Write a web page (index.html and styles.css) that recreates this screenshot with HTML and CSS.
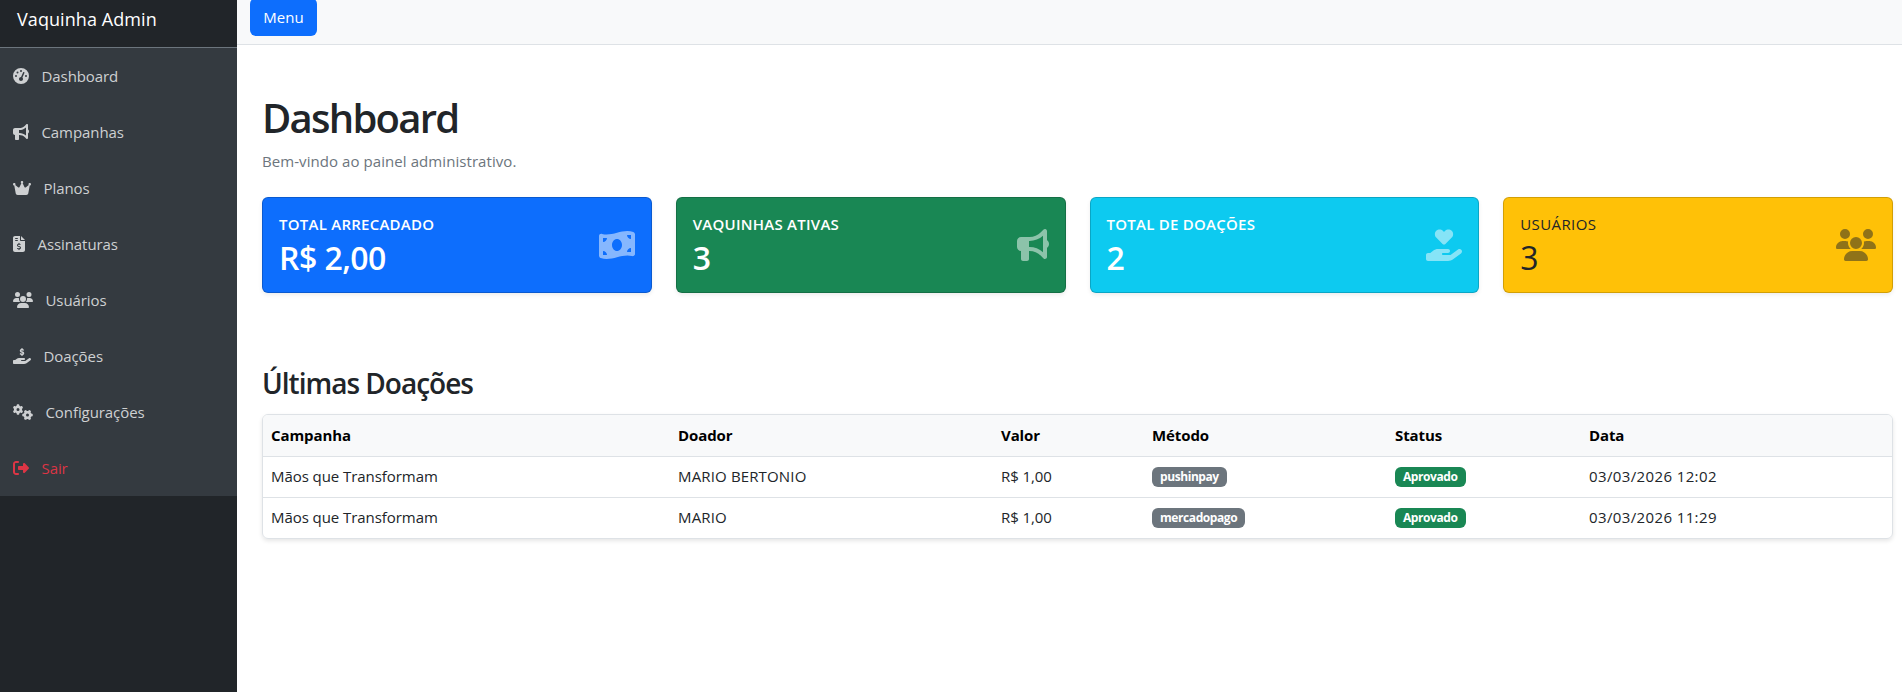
FILE: index.html
```html
<!DOCTYPE html>
<html lang="pt-BR">
<head>
<meta charset="utf-8">
<title>Vaquinha Admin</title>
<link rel="stylesheet" href="styles.css">
</head>
<body>
<div class="shell">
  <aside class="sidebar">
    <div class="brand">Vaquinha Admin</div>
    <nav class="nav">
      <a class="nav-link"><svg class="ico w16" viewBox="0 0 512 512"><path d="M0 256a256 256 0 1 1 512 0A256 256 0 1 1 0 256zM288 96a32 32 0 1 0 -64 0 32 32 0 1 0 64 0zM256 416c35.3 0 64-28.7 64-64c0-17.4-6.9-33.1-18.1-44.6L366 161.7c5.3-12.1-.2-26.3-12.3-31.6s-26.3 .2-31.6 12.3L257.9 288c-.6 0-1.3 0-1.9 0c-35.3 0-64 28.7-64 64s28.7 64 64 64zM176 144a32 32 0 1 0 -64 0 32 32 0 1 0 64 0zM96 288a32 32 0 1 0 0-64 32 32 0 1 0 0 64zm352-32a32 32 0 1 0 -64 0 32 32 0 1 0 64 0z"/></svg>Dashboard</a>
      <a class="nav-link"><svg class="ico w16" viewBox="0 0 512 512"><path d="M480 32c0-12.9-7.8-24.6-19.8-29.6s-25.7-2.2-34.9 6.9L381.7 53c-48 48-113.1 75-181 75H192 160 64c-35.3 0-64 28.7-64 64v96c0 35.3 28.7 64 64 64l0 128c0 17.7 14.3 32 32 32h64c17.7 0 32-14.3 32-32V352l8.7 0c67.9 0 133 27 181 75l43.6 43.6c9.2 9.2 22.9 11.9 34.9 6.9s19.8-16.6 19.8-29.6V300.4c18.6-8.8 32-32.5 32-60.4s-13.4-51.6-32-60.4V32zm-64 76.7V240 371.3C357.2 317.8 280.5 288 200.7 288H192V192h8.7c79.8 0 156.5-29.8 215.3-83.3z"/></svg>Campanhas</a>
      <a class="nav-link"><svg class="ico w18" viewBox="0 0 576 512"><path d="M309 106c11.4-7 19-19.7 19-34c0-22.1-17.9-40-40-40s-40 17.9-40 40c0 14.4 7.6 27 19 34L209.7 220.6c-9.1 18.2-32.7 23.4-48.6 10.7L72 160c5-6.7 8-15 8-24c0-22.1-17.9-40-40-40S0 113.9 0 136s17.9 40 40 40c.2 0 .5 0 .7 0L86.4 427.4c5.5 30.4 32 52.6 63 52.6H426.6c30.9 0 57.4-22.1 63-52.6L535.3 176c.2 0 .5 0 .7 0c22.1 0 40-17.9 40-40s-17.9-40-40-40s-40 17.9-40 40c0 9 3 17.3 8 24l-89.1 71.3c-15.9 12.7-39.5 7.5-48.6-10.7L309 106z"/></svg>Planos</a>
      <a class="nav-link"><svg class="ico w12" viewBox="0 0 384 512"><path d="M64 0C28.7 0 0 28.7 0 64V448c0 35.3 28.7 64 64 64H320c35.3 0 64-28.7 64-64V160H256c-17.7 0-32-14.3-32-32V0H64zM256 0V128H384L256 0zM64 80c0-8.8 7.2-16 16-16h64c8.8 0 16 7.2 16 16s-7.2 16-16 16H80c-8.8 0-16-7.2-16-16zm0 64c0-8.8 7.2-16 16-16h64c8.8 0 16 7.2 16 16s-7.2 16-16 16H80c-8.8 0-16-7.2-16-16zm128 72c8.8 0 16 7.2 16 16v17.3c8.5 1.2 16.7 3.1 24.1 5.1c8.5 2.3 13.6 11 11.3 19.6s-11 13.6-19.6 11.3c-11.1-3-22-5.2-32.1-5.3c-8.4-.1-17.4 1.8-23.6 5.5c-5.7 3.4-8.1 7.3-8.1 12.8c0 3.7 1.3 6.5 7.3 10.1c6.9 4.1 16.6 7.1 29.2 10.9l.5 .1 0 0 0 0c11.3 3.4 25.3 7.6 36.3 14.6c12.1 7.6 22.4 19.7 22.7 38.2c.3 19.3-9.6 33.3-22.9 41.6c-7.7 4.8-16.4 7.6-25.1 9.1V440c0 8.8-7.2 16-16 16s-16-7.2-16-16V422.2c-11.2-2.1-21.7-5.7-30.9-8.9l0 0 0 0c-2.1-.7-4.2-1.4-6.2-2.1c-8.4-2.8-12.9-11.9-10.1-20.2s11.9-12.9 20.2-10.1c2.5 .8 4.8 1.6 7.1 2.4l0 0 0 0 0 0c13.6 4.6 24.6 8.4 36.3 8.7c9.1 .3 17.9-1.7 23.7-5.3c5.1-3.2 7.9-7.3 7.8-14c-.1-4.6-1.8-7.8-7.7-11.6c-6.8-4.3-16.5-7.4-29-11.2l-1.6-.5 0 0c-11-3.3-24.7-7.4-35.6-14c-12-7.2-22.6-18.9-22.7-37.3c-.1-19.4 10.8-32.8 23.8-40.5c7.5-4.4 15.8-7.2 24.1-8.7V232c0-8.8 7.2-16 16-16z"/></svg>Assinaturas</a>
      <a class="nav-link"><svg class="ico w20" viewBox="0 0 640 512"><path d="M144 0a80 80 0 1 1 0 160A80 80 0 1 1 144 0zM512 0a80 80 0 1 1 0 160A80 80 0 1 1 512 0zM0 298.7C0 239.8 47.8 192 106.7 192h42.7c15.9 0 31 3.5 44.6 9.7c-1.3 7.2-1.9 14.7-1.9 22.3c0 38.2 16.8 72.5 43.3 96c-.2 0-.4 0-.7 0H21.3C9.6 320 0 310.4 0 298.7zM405.3 320c-.2 0-.4 0-.7 0c26.6-23.5 43.3-57.8 43.3-96c0-7.6-.7-15-1.9-22.3c13.6-6.3 28.7-9.7 44.6-9.7h42.7C592.2 192 640 239.8 640 298.7c0 11.8-9.6 21.3-21.3 21.3H405.3zM224 224a96 96 0 1 1 192 0 96 96 0 1 1 -192 0zM128 485.3C128 411.7 187.7 352 261.3 352H378.7C452.3 352 512 411.7 512 485.3c0 14.7-11.9 26.7-26.7 26.7H154.7c-14.7 0-26.7-11.9-26.7-26.7z"/></svg>Usuários</a>
      <a class="nav-link"><svg class="ico w18" viewBox="0 0 576 512"><path d="M312 24V34.5c6.4 1.2 12.6 2.7 18.2 4.2c12.8 3.4 20.4 16.6 17 29.4s-16.6 20.4-29.4 17c-10.9-2.9-21.1-4.9-30.2-5c-7.3-.1-14.7 1.7-19.4 4.4c-2.1 1.3-3.1 2.4-3.5 3c-.3 .5-.7 1.2-.7 2.8c0 .3 0 .5 0 .6c.2 .2 .9 1.2 3.3 2.6c5.8 3.5 14.4 6.2 27.4 10.1l.9 .3c11.1 3.3 25.9 7.8 37.9 15.3c13.7 8.6 26.1 22.9 26.4 44.9c.3 22.5-11.4 38.9-26.7 48.5c-6.7 4.1-13.9 7-21.1 8.8V232c0 13.3-10.7 24-24 24s-24-10.7-24-24V220.6c-9.5-2.3-18.2-5.3-25.6-7.8c-2.1-.7-4.1-1.4-6-2c-12.6-4.2-19.4-17.8-15.2-30.4s17.8-19.4 30.4-15.2c2.6 .9 5 1.7 7.3 2.5c13.6 4.6 23.4 7.9 33.9 8.3c8 .3 15.1-1.6 19.2-4.1c1.9-1.2 2.8-2.2 3.2-2.9c.4-.6 .9-1.8 .8-4.1l0-.2c0-1 0-2.1-4-4.6c-5.7-3.6-14.3-6.4-27.1-10.3l-1.9-.6c-10.8-3.2-25-7.5-36.4-14.4c-13.5-8.1-26.5-22-26.6-44.1c-.1-22.9 12.9-38.6 27.7-47.4c6.4-3.8 13.3-6.4 20.2-8.2V24c0-13.3 10.7-24 24-24s24 10.7 24 24zM568.2 336.3c13.1 17.8 9.3 42.8-8.5 55.9L433.1 485.5c-23.4 17.2-51.6 26.5-80.7 26.5H192 32c-17.7 0-32-14.3-32-32V416c0-17.7 14.3-32 32-32H68.8l44.9-36c22.7-18.2 50.9-28 80-28H272h16 64c17.7 0 32 14.3 32 32s-14.3 32-32 32H288 272c-8.8 0-16 7.2-16 16s7.2 16 16 16H392.6l119.7-88.2c17.8-13.1 42.8-9.3 55.9 8.5z"/></svg>Doações</a>
      <a class="nav-link"><svg class="ico w20" viewBox="0 0 640 512"><path d="M308.5 135.3c7.1-6.3 9.9-16.2 6.2-25c-2.3-5.3-4.8-10.5-7.6-15.5L304 89.4c-3-5-6.3-9.9-9.8-14.6c-5.7-7.6-15.7-10.1-24.7-7.1l-28.2 9.3c-10.7-8.8-23-16-36.2-20.9L199 27.1c-1.9-9.3-9.1-16.7-18.5-17.8C173.9 8.4 167.2 8 160.4 8h-.7c-6.8 0-13.5 .4-20.1 1.2c-9.4 1.1-16.6 8.6-18.5 17.8L115 56.1c-13.3 5-25.5 12.1-36.2 20.9L50.5 67.8c-9-3-19-.5-24.7 7.1c-3.5 4.7-6.8 9.6-9.9 14.6l-3 5.3c-2.8 5-5.3 10.2-7.6 15.6c-3.7 8.7-.9 18.6 6.2 25l22.2 19.8C32.6 161.9 32 168.9 32 176s.6 14.1 1.7 20.9L11.5 216.7c-7.1 6.3-9.9 16.2-6.2 25c2.3 5.3 4.8 10.5 7.6 15.6l3 5.2c3 5.1 6.3 9.9 9.9 14.6c5.7 7.6 15.7 10.1 24.7 7.1l28.2-9.3c10.7 8.8 23 16 36.2 20.9l6.1 29.1c1.9 9.3 9.1 16.7 18.5 17.8c6.7 .8 13.5 1.2 20.4 1.2s13.7-.4 20.4-1.2c9.4-1.1 16.6-8.6 18.5-17.8l6.1-29.1c13.3-5 25.5-12.1 36.2-20.9l28.2 9.3c9 3 19 .5 24.7-7.1c3.5-4.7 6.8-9.5 9.8-14.6l3.1-5.4c2.8-5 5.3-10.2 7.6-15.5c3.7-8.7 .9-18.6-6.2-25l-22.2-19.8c1.1-6.8 1.7-13.8 1.7-20.9s-.6-14.1-1.7-20.9l22.2-19.8zM112 176a48 48 0 1 1 96 0 48 48 0 1 1 -96 0zM504.7 500.5c6.3 7.1 16.2 9.9 25 6.2c5.3-2.3 10.5-4.8 15.5-7.6l5.4-3.1c5-3 9.9-6.3 14.6-9.8c7.6-5.7 10.1-15.7 7.1-24.7l-9.3-28.2c8.8-10.7 16-23 20.9-36.2l29.1-6.1c9.3-1.9 16.7-9.1 17.8-18.5c.8-6.7 1.2-13.5 1.2-20.4s-.4-13.7-1.2-20.4c-1.1-9.4-8.6-16.6-17.8-18.5L583.9 307c-5-13.3-12.1-25.5-20.9-36.2l9.3-28.2c3-9 .5-19-7.1-24.7c-4.7-3.5-9.6-6.8-14.6-9.9l-5.3-3c-5-2.8-10.2-5.3-15.6-7.6c-8.7-3.7-18.6-.9-25 6.2l-19.8 22.2c-6.8-1.1-13.8-1.7-20.9-1.7s-14.1 .6-20.9 1.7l-19.8-22.2c-6.3-7.1-16.2-9.9-25-6.2c-5.3 2.3-10.5 4.8-15.6 7.6l-5.2 3c-5.1 3-9.9 6.3-14.6 9.9c-7.6 5.7-10.1 15.7-7.1 24.7l9.3 28.2c-8.8 10.7-16 23-20.9 36.2L315.1 313c-9.3 1.9-16.7 9.1-17.8 18.5c-.8 6.7-1.2 13.5-1.2 20.4s.4 13.7 1.2 20.4c1.1 9.4 8.6 16.6 17.8 18.5l29.1 6.1c5 13.3 12.1 25.5 20.9 36.2l-9.3 28.2c-3 9-.5 19 7.1 24.7c4.7 3.5 9.5 6.8 14.6 9.8l5.4 3.1c5 2.8 10.2 5.3 15.5 7.6c8.7 3.7 18.6 .9 25-6.2l19.8-22.2c6.8 1.1 13.8 1.7 20.9 1.7s14.1-.6 20.9-1.7l19.8 22.2zM464 304a48 48 0 1 1 0 96 48 48 0 1 1 0-96z"/></svg>Configurações</a>
      <a class="nav-link danger"><svg class="ico w16" viewBox="0 0 512 512"><path d="M377.9 105.9L500.7 228.7c7.2 7.2 11.3 17.1 11.3 27.3s-4.1 20.1-11.3 27.3L377.9 406.1c-6.4 6.4-15 9.9-24 9.9c-18.7 0-33.9-15.2-33.9-33.9l0-62.1-128 0c-17.7 0-32-14.3-32-32l0-64c0-17.7 14.3-32 32-32l128 0 0-62.1c0-18.7 15.2-33.9 33.9-33.9c9 0 17.6 3.5 24 9.9zM160 96L96 96c-17.7 0-32 14.3-32 32l0 256c0 17.7 14.3 32 32 32l64 0c17.7 0 32 14.3 32 32s-14.3 32-32 32l-64 0c-53 0-96-43-96-96L0 128C0 75 43 32 96 32l64 0c17.7 0 32 14.3 32 32s-14.3 32-32 32z"/></svg>Sair</a>
    </nav>
  </aside>
  <div class="main">
    <header class="topbar"><button class="menu-btn">Menu</button></header>
    <main class="content">
      <h1 class="title">Dashboard</h1>
      <p class="subtitle">Bem-vindo ao painel administrativo.</p>
      <section class="stats">
        <div class="stat blue">
          <div><div class="stat-label">TOTAL ARRECADADO</div><div class="stat-value">R$ 2,00</div></div>
          <svg class="stat-icon" viewBox="0 0 576 512"><path d="M0 112.5V422.3c0 18 10.1 35 27 41.3c87 32.5 174 10.3 261-11.9c79.8-20.3 159.6-40.7 239.3-18.9c23 6.3 48.7-9.5 48.7-33.4V89.7c0-18-10.1-35-27-41.3C462 15.9 375 38.1 288 60.3C208.2 80.6 128.4 100.9 48.7 79.1C25.6 72.8 0 88.6 0 112.5zM288 352c-44.2 0-80-43-80-96s35.8-96 80-96s80 43 80 96s-35.8 96-80 96zM64 352c35.3 0 64 28.7 64 64H64V352zm64-208c0 35.3-28.7 64-64 64V144h64zM512 304v64H448c0-35.3 28.7-64 64-64zM448 96h64v64c-35.3 0-64-28.7-64-64z"/></svg>
        </div>
        <div class="stat green">
          <div><div class="stat-label">VAQUINHAS ATIVAS</div><div class="stat-value">3</div></div>
          <svg class="stat-icon" viewBox="0 0 512 512"><path d="M480 32c0-12.9-7.8-24.6-19.8-29.6s-25.7-2.2-34.9 6.9L381.7 53c-48 48-113.1 75-181 75H192 160 64c-35.3 0-64 28.7-64 64v96c0 35.3 28.7 64 64 64l0 128c0 17.7 14.3 32 32 32h64c17.7 0 32-14.3 32-32V352l8.7 0c67.9 0 133 27 181 75l43.6 43.6c9.2 9.2 22.9 11.9 34.9 6.9s19.8-16.6 19.8-29.6V300.4c18.6-8.8 32-32.5 32-60.4s-13.4-51.6-32-60.4V32zm-64 76.7V240 371.3C357.2 317.8 280.5 288 200.7 288H192V192h8.7c79.8 0 156.5-29.8 215.3-83.3z"/></svg>
        </div>
        <div class="stat cyan">
          <div><div class="stat-label">TOTAL DE DOAÇÕES</div><div class="stat-value">2</div></div>
          <svg class="stat-icon" viewBox="0 0 576 512"><path d="M163.9 136.9c-29.4-29.8-29.4-78.2 0-108s77-29.8 106.4 0l17.7 18 17.7-18c29.4-29.8 77-29.8 106.4 0s29.4 78.2 0 108L310.5 240.1c-6.2 6.3-14.3 9.4-22.5 9.4s-16.3-3.1-22.5-9.4L163.9 136.9zM568.2 336.3c13.1 17.8 9.3 42.8-8.5 55.9L433.1 485.5c-23.4 17.2-51.6 26.5-80.7 26.5H192 32c-17.7 0-32-14.3-32-32V416c0-17.7 14.3-32 32-32H68.8l44.9-36c22.7-18.2 50.9-28 80-28H272h16 64c17.7 0 32 14.3 32 32s-14.3 32-32 32H288 272c-8.8 0-16 7.2-16 16s7.2 16 16 16H392.6l119.7-88.2c17.8-13.1 42.8-9.3 55.9 8.5z"/></svg>
        </div>
        <div class="stat yellow">
          <div><div class="stat-label">USUÁRIOS</div><div class="stat-value">3</div></div>
          <svg class="stat-icon" viewBox="0 0 640 512"><path d="M144 0a80 80 0 1 1 0 160A80 80 0 1 1 144 0zM512 0a80 80 0 1 1 0 160A80 80 0 1 1 512 0zM0 298.7C0 239.8 47.8 192 106.7 192h42.7c15.9 0 31 3.5 44.6 9.7c-1.3 7.2-1.9 14.7-1.9 22.3c0 38.2 16.8 72.5 43.3 96c-.2 0-.4 0-.7 0H21.3C9.6 320 0 310.4 0 298.7zM405.3 320c-.2 0-.4 0-.7 0c26.6-23.5 43.3-57.8 43.3-96c0-7.6-.7-15-1.9-22.3c13.6-6.3 28.7-9.7 44.6-9.7h42.7C592.2 192 640 239.8 640 298.7c0 11.8-9.6 21.3-21.3 21.3H405.3zM224 224a96 96 0 1 1 192 0 96 96 0 1 1 -192 0zM128 485.3C128 411.7 187.7 352 261.3 352H378.7C452.3 352 512 411.7 512 485.3c0 14.7-11.9 26.7-26.7 26.7H154.7c-14.7 0-26.7-11.9-26.7-26.7z"/></svg>
        </div>
      </section>
      <h2 class="section-title">Últimas Doações</h2>
      <div class="table-card">
        <table class="table">
          <colgroup><col class="c1"><col class="c2"><col class="c3"><col class="c4"><col class="c5"><col class="c6"></colgroup>
          <thead><tr><th>Campanha</th><th>Doador</th><th>Valor</th><th>Método</th><th>Status</th><th>Data</th></tr></thead>
          <tbody>
            <tr><td class="camp">Mãos que Transformam</td><td class="donor">MARIO BERTONIO</td><td class="money">R$ 1,00</td><td><span class="badge gray">pushinpay</span></td><td><span class="badge ok">Aprovado</span></td><td class="date">03/03/2026 12:02</td></tr>
            <tr><td class="camp">Mãos que Transformam</td><td class="donor">MARIO</td><td class="money">R$ 1,00</td><td><span class="badge gray">mercadopago</span></td><td><span class="badge ok">Aprovado</span></td><td class="date">03/03/2026 11:29</td></tr>
          </tbody>
        </table>
      </div>
    </main>
  </div>
</div>
</body>
</html>
```
FILE: styles.css
```css
* { box-sizing: border-box; }
html, body { margin: 0; height: 100%; overflow: hidden; background: #fff; }
body { font-family: "Open Sans", "Noto Sans", sans-serif; font-size: 15px; color: #212529; }
.shell { display: flex; height: 694px; margin-top: -2px; }
.sidebar { width: 237px; flex: none; background: #212529; color: #fff; }
.brand { height: 50px; padding: 0 17px 7px; display: flex; align-items: center; font-size: 18px; letter-spacing: .08px; border-bottom: 1px solid #6c757d; }
.nav { background: #343a40; display: flex; flex-direction: column; }
.nav-link { height: 56px; padding-left: 13px; display: flex; align-items: center; color: #ced0d2; letter-spacing: -.08px; }
.nav-link.danger { color: #dc3545; }
.ico { height: 16px; fill: currentColor; margin-right: 12.5px; flex: none; }
.w12 { width: 12px; }
.w16 { width: 16px; }
.w18 { width: 18px; }
.w20 { width: 20px; }
.main { flex: 1; min-width: 0; }
.topbar { height: 47px; background: #f8f9fa; border-bottom: 1px solid #dee2e6; padding-left: 13px; }
.menu-btn { height: 38px; width: 67px; background: #0d6efd; color: #fff; border: 0; border-radius: 6px; font: inherit; padding: 0; }
.content { padding: 49px 9px 0 25px; }
.title { margin: 0; font-size: 40px; font-weight: 600; line-height: 48px; letter-spacing: -1.75px; }
.subtitle { margin: 7px 0 0; color: #6c757d; line-height: 24px; letter-spacing: .07px; }
.stats { display: grid; grid-template-columns: repeat(4, 1fr); gap: 24px; margin-top: 24px; }
.stat { height: 96px; border: 1px solid rgba(0,0,0,.175); border-radius: 6px; padding: 16px; display: flex; justify-content: space-between; align-items: center; box-shadow: 0 2px 4px rgba(0,0,0,.075); color: #fff; }
.stat-label { font-size: 15px; font-weight: 600; line-height: 24px; letter-spacing: .25px; margin-top: -1px; }
.stat-value { font-size: 32px; font-weight: 600; line-height: 38px; letter-spacing: -.55px; margin-top: 3px; }
.yellow .stat-label { font-weight: 500; letter-spacing: .4px; }
.yellow .stat-value { font-weight: 500; }
.stat-icon { height: 32px; fill: currentColor; opacity: .5; }
.blue .stat-icon { width: 36px; }
.green .stat-icon { width: 32px; }
.cyan .stat-icon { width: 36px; }
.yellow .stat-icon { width: 40px; }
.blue { background: #0d6efd; }
.green { background: #198754; }
.cyan { background: #0dcaf0; }
.yellow { background: #ffc107; color: #212529; }
.section-title { margin: 73px 0 0; font-size: 28px; font-weight: 600; line-height: 34px; letter-spacing: -1px; }
.table-card { margin-top: 14px; border: 1px solid #dee2e6; border-radius: 6px; box-shadow: 0 2px 4px rgba(0,0,0,.1); overflow: hidden; }
.table { width: 100%; table-layout: fixed; border-collapse: collapse; }
.c1 { width: 407px; }
.c2 { width: 323px; }
.c3 { width: 151px; }
.c4 { width: 243px; }
.c5 { width: 194px; }
.table th, .table td { height: 41px; padding: 0 8px 1px; text-align: left; vertical-align: middle; }
.table th { background: #f8f9fa; color: #000; font-weight: 700; border-bottom: 1px solid #dee2e6; letter-spacing: -.1px; }
.table tbody tr + tr td { border-top: 1px solid #dee2e6; }
.camp { letter-spacing: -.06px; }
.donor { letter-spacing: .15px; }
.money { letter-spacing: -.1px; }
.date { letter-spacing: .38px; }
.badge { display: inline-block; color: #fff; font-size: 12px; font-weight: 700; line-height: 1; padding: 4px 8px; border-radius: 6px; letter-spacing: -.42px; vertical-align: middle; }
.gray { background: #6c757d; }
.ok { background: #198754; }
```
